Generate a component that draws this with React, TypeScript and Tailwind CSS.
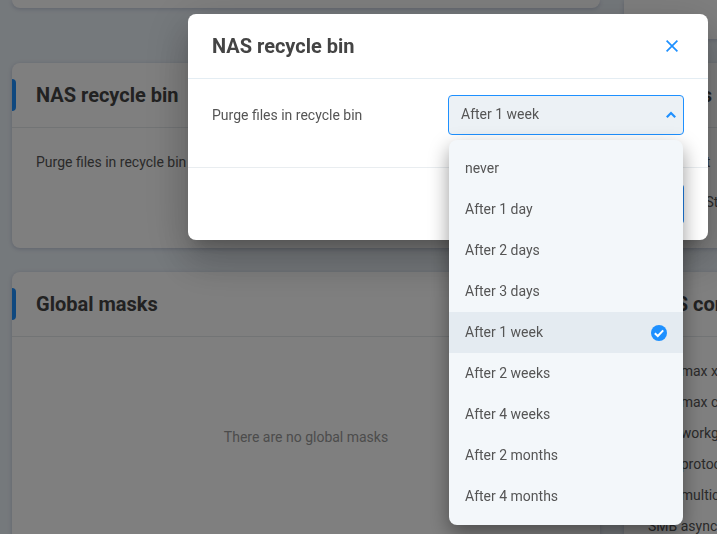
import React, { useState } from 'react';

const purgeOptions = [
  'never',
  'After 1 day',
  'After 2 days',
  'After 3 days',
  'After 1 week',
  'After 2 weeks',
  'After 4 weeks',
  'After 2 months',
  'After 4 months',
];

const configRows = [
  'SMB max xmit',
  'SMB max connections',
  'SMB workgroup',
  'SMB protocol',
  'SMB multichannel',
  'SMB async io',
];

function Card({ title, accent = false, children }: { title: string; accent?: boolean; children?: React.ReactNode }) {
  return (
    <section className="rounded-lg bg-white shadow-[0_1px_4px_rgba(90,100,150,0.3)]">
      <header className="flex h-[65px] items-center border-b border-[#e4e8eb]">
        <span className={`h-8 w-1 rounded-r-sm ${accent ? 'bg-[#1e90ff]' : ''}`} />
        <h2 className="pl-5 text-xl font-bold text-[#444]">{title}</h2>
      </header>
      {children}
    </section>
  );
}

function PurgeSelect() {
  const [value, setValue] = useState('After 1 week');
  const [open, setOpen] = useState(true);

  const pick = (option: string) => {
    setValue(option);
    setOpen(false);
  };

  return (
    <div className="relative w-[236px]">
      <select
        id="purge"
        value={value}
        onChange={(e) => setValue(e.target.value)}
        onMouseDown={(e) => {
          e.preventDefault();
          setOpen(!open);
        }}
        className="block h-10 w-full appearance-none rounded border border-[#1e90ff] bg-[#ecf1f5] pr-8 pb-0.5 pl-3 text-[#555] outline-none"
      >
        {purgeOptions.map((option) => (
          <option key={option}>{option}</option>
        ))}
      </select>
      <svg className="pointer-events-none absolute top-4 right-2" width="10" height="8" viewBox="0 0 10 8" fill="none" stroke="#1e90ff" strokeWidth="2.2">
        <path d="M0.8 6.2 5 2l4.2 4.2" />
      </svg>

      {/* Options list */}
      {open && (
        <ul className="absolute inset-x-px top-full z-10 mt-[5px] rounded-lg bg-[#f3f7fa] py-2 shadow-[0_8px_20px_rgba(0,0,0,0.4)]">
          {purgeOptions.map((option) => (
            <li key={option}>
              <button
                type="button"
                onClick={() => pick(option)}
                className={`flex h-[41px] w-full items-center justify-between px-4 text-left text-[#555] ${option === value ? 'bg-[#e4ebf1]' : 'hover:bg-[#ecf1f5]'}`}
              >
                <span className="pb-0.5">{option}</span>
                {option === value && (
                  <svg width="16" height="16" viewBox="0 0 16 16" fill="none">
                    <circle cx="8" cy="8" r="8" fill="#1e90ff" />
                    <path d="M3.8 8.2 6.8 11l5.4-5.6" stroke="#fff" strokeWidth="2" />
                  </svg>
                )}
              </button>
            </li>
          ))}
        </ul>
      )}
    </div>
  );
}

export default function App() {
  return (
    <div className="h-screen overflow-hidden bg-[#ebf2f8] font-[Roboto,sans-serif] text-sm leading-5 text-[#555]">
      {/* Settings page */}
      <main className="grid min-w-[1224px] grid-cols-2 items-stretch gap-6 px-3">
        <div className="h-2 rounded-b-lg bg-white shadow-[0_1px_4px_rgba(90,100,150,0.3)]" />
        <div className="h-[39px] rounded-b-lg bg-white shadow-[0_1px_4px_rgba(90,100,150,0.3)]" />

        <Card title="NAS recycle bin" accent>
          <div className="flex p-6">
            <span>Purge files in recycle bin</span>
          </div>
        </Card>
        <Card title="Quotas">
          <div className="flex flex-col gap-5 px-6 pt-6 pb-9">
            <div>Mount list</div>
            <div className="flex gap-3">
              <span>Service</span>
              <span>Stopped</span>
            </div>
          </div>
        </Card>

        <Card title="Global masks" accent>
          <p className="py-[90px] text-center text-[#999]">There are no global masks</p>
        </Card>
        <Card title="NAS config">
          <ul className="flex flex-col gap-[11px] p-6">
            {configRows.map((row) => (
              <li key={row}>{row}</li>
            ))}
          </ul>
        </Card>
      </main>

      {/* Dialog */}
      <div className="fixed inset-0 flex items-start justify-end bg-black/50 pt-3.5 pr-[9px]">
        <div
          role="dialog"
          aria-labelledby="dialog-title"
          className="w-full max-w-[520px] rounded-lg bg-white shadow-[0_11px_15px_-7px_rgba(0,0,0,0.2),0_24px_38px_3px_rgba(0,0,0,0.14),0_9px_46px_8px_rgba(0,0,0,0.12)]"
        >
          <header className="flex h-[65px] items-center justify-between border-b border-[#e4edf3] px-6">
            <h1 id="dialog-title" className="text-xl font-bold text-[#444]">NAS recycle bin</h1>
            <button type="button" aria-label="Close" className="flex size-6 items-center justify-center">
              <svg width="12" height="12" viewBox="0 0 12 12" fill="none" stroke="#1e90ff" strokeWidth="1.7">
                <path d="M0.6 0.6 11.4 11.4M11.4 0.6 0.6 11.4" />
              </svg>
            </button>
          </header>
          <div className="flex items-center justify-between border-b border-[#e9edf0] px-6 pt-4 pb-8">
            <label htmlFor="purge">Purge files in recycle bin</label>
            <PurgeSelect />
          </div>
          <footer className="flex justify-end p-4 pr-6">
            <button type="button" aria-label="Save" className="h-10 w-24 rounded bg-[#1e80e8]" />
          </footer>
        </div>
      </div>
    </div>
  );
}
